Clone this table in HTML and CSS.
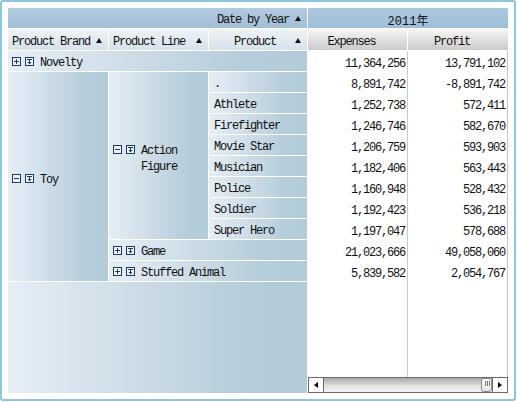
FILE: index.html
```html
<!DOCTYPE html>
<html>
<head>
<meta charset="utf-8">
<link rel="stylesheet" href="styles.css">
</head>
<body>
<div class="frame">
  <div class="pivot">
    <div class="left">
      <div class="h-top span-all"><span>Date by Year</span><i class="sort"></i></div>
      <div class="h-col"><span class="label">Product Brand</span><i class="sort"></i></div>
      <div class="h-col"><span class="label">Product Line</span><i class="sort"></i></div>
      <div class="h-col center"><span class="label">Product</span><i class="sort"></i></div>

      <div class="cell span-all">
        <span class="icons">
          <svg class="ic" viewBox="0 0 9 9"><rect x=".5" y=".5" width="8" height="8" fill="#eef4f9" stroke="#1b3b62"/><path d="M2 4.5h5M4.5 2v5" stroke="#1b3b62"/></svg>
          <svg class="ic" viewBox="0 0 9 9"><rect x=".5" y=".5" width="8" height="8" fill="#eef4f9" stroke="#1b3b62"/><path d="M2 2.5h5M4.5 2.5v3" stroke="#1b3b62"/><path d="M2.5 5h4l-2 2.5z" fill="#1b3b62"/></svg>
        </span>
        <span>Novelty</span>
      </div>

      <div class="cell toy">
        <span class="icons">
          <svg class="ic" viewBox="0 0 9 9"><rect x=".5" y=".5" width="8" height="8" fill="#eef4f9" stroke="#1b3b62"/><path d="M2 4.5h5" stroke="#1b3b62"/></svg>
          <svg class="ic" viewBox="0 0 9 9"><rect x=".5" y=".5" width="8" height="8" fill="#eef4f9" stroke="#1b3b62"/><path d="M2 2.5h5M4.5 2.5v3" stroke="#1b3b62"/><path d="M2.5 5h4l-2 2.5z" fill="#1b3b62"/></svg>
        </span>
        <span>Toy</span>
      </div>

      <div class="cell af">
        <div class="group">
          <span class="icons">
            <svg class="ic" viewBox="0 0 9 9"><rect x=".5" y=".5" width="8" height="8" fill="#eef4f9" stroke="#1b3b62"/><path d="M2 4.5h5" stroke="#1b3b62"/></svg>
            <svg class="ic" viewBox="0 0 9 9"><rect x=".5" y=".5" width="8" height="8" fill="#eef4f9" stroke="#1b3b62"/><path d="M2 2.5h5M4.5 2.5v3" stroke="#1b3b62"/><path d="M2.5 5h4l-2 2.5z" fill="#1b3b62"/></svg>
          </span>
          <span class="wrap">Action Figure</span>
        </div>
      </div>

      <div class="cell prod">.</div>
      <div class="cell prod">Athlete</div>
      <div class="cell prod">Firefighter</div>
      <div class="cell prod">Movie Star</div>
      <div class="cell prod">Musician</div>
      <div class="cell prod">Police</div>
      <div class="cell prod">Soldier</div>
      <div class="cell prod">Super Hero</div>

      <div class="cell wide">
        <span class="icons">
          <svg class="ic" viewBox="0 0 9 9"><rect x=".5" y=".5" width="8" height="8" fill="#eef4f9" stroke="#1b3b62"/><path d="M2 4.5h5M4.5 2v5" stroke="#1b3b62"/></svg>
          <svg class="ic" viewBox="0 0 9 9"><rect x=".5" y=".5" width="8" height="8" fill="#eef4f9" stroke="#1b3b62"/><path d="M2 2.5h5M4.5 2.5v3" stroke="#1b3b62"/><path d="M2.5 5h4l-2 2.5z" fill="#1b3b62"/></svg>
        </span>
        <span>Game</span>
      </div>
      <div class="cell wide">
        <span class="icons">
          <svg class="ic" viewBox="0 0 9 9"><rect x=".5" y=".5" width="8" height="8" fill="#eef4f9" stroke="#1b3b62"/><path d="M2 4.5h5M4.5 2v5" stroke="#1b3b62"/></svg>
          <svg class="ic" viewBox="0 0 9 9"><rect x=".5" y=".5" width="8" height="8" fill="#eef4f9" stroke="#1b3b62"/><path d="M2 2.5h5M4.5 2.5v3" stroke="#1b3b62"/><path d="M2.5 5h4l-2 2.5z" fill="#1b3b62"/></svg>
        </span>
        <span>Stuffed Animal</span>
      </div>

      <div class="cell span-all filler"></div>
    </div>

    <div class="right">
      <div class="rh-top">2011年</div>
      <div class="rh-cols">
        <div>Expenses</div>
        <div>Profit</div>
      </div>
      <div class="data">
        <span>11,364,256</span><span>13,791,102</span>
        <span>8,891,742</span><span>-8,891,742</span>
        <span>1,252,738</span><span>572,411</span>
        <span>1,246,746</span><span>582,670</span>
        <span>1,206,759</span><span>593,903</span>
        <span>1,182,406</span><span>563,443</span>
        <span>1,160,948</span><span>528,432</span>
        <span>1,192,423</span><span>536,218</span>
        <span>1,197,047</span><span>578,688</span>
        <span>21,023,666</span><span>49,058,060</span>
        <span>5,839,582</span><span>2,054,767</span>
      </div>
      <div class="scroll">
        <div class="btn left-btn"><i class="tri-l"></i></div>
        <div class="track"><div class="thumb"></div></div>
        <div class="btn right-btn"><i class="tri-r"></i></div>
      </div>
    </div>
  </div>
</div>
</body>
</html>
```

FILE: styles.css
```css
* { box-sizing: border-box; }
html, body { margin: 0; padding: 0; background: #fff; }
body {
  font-family: "Liberation Mono", "Noto Sans CJK SC", monospace;
  font-size: 12px;
  letter-spacing: -1.2px;
  color: #111;
}
.frame {
  width: 516px;
  height: 401px;
  border: 2px solid #8dc6e5;
  border-radius: 3px;
  padding: 6px;
  background: #fff;
}
.pivot {
  display: flex;
  gap: 1px;
  height: 100%;
}
.left {
  width: 299px;
  display: grid;
  grid-template-columns: 100px 99px 98px;
  grid-template-rows: 20px 21px repeat(11, 20px) 1fr;
  gap: 1px;
  background: #fff;
}
.span-all { grid-column: 1 / -1; }
.wide { grid-column: span 2; }

.h-top {
  background: linear-gradient(#b3cadf, #a3bed6);
  display: flex;
  align-items: center;
  justify-content: flex-end;
  gap: 6px;
  padding: 4px 6px 0 0;
}
.h-col {
  background: linear-gradient(#eef3f7, #d6e2eb);
  display: flex;
  align-items: center;
  padding: 4px 6px 0 4px;
}
.h-col .label { flex: 1; }
.h-col.center .label { text-align: center; padding-left: 2px; }
.sort {
  display: block;
  width: 0;
  height: 0;
  margin-top: -3px;
  border-left: 3px solid transparent;
  border-right: 3px solid transparent;
  border-bottom: 5px solid #111;
}

.cell {
  background: linear-gradient(to right, #e6eef5 0%, #b5ccda 80%, #b3cbd9 100%);
  display: flex;
  align-items: center;
  padding: 4px 0 0 4px;
}
.cell .icons { margin-top: -3px; }
.toy { grid-row: span 10; padding-top: 6px; }
.af { grid-row: span 8; padding-top: 6px; }
.prod { padding-left: 5px; }
.icons {
  display: flex;
  gap: 4px;
  margin-right: 6px;
  flex: none;
}
.ic { width: 9px; height: 9px; display: block; }
.group { display: flex; align-items: flex-start; }
.cell .group .icons { margin-top: 2px; }
.wrap { width: 56px; line-height: 16px; }

.right {
  width: 200px;
  display: flex;
  flex-direction: column;
}
.rh-top {
  height: 20px;
  margin-bottom: 1px;
  background: linear-gradient(#abc8df, #9fbfd9);
  display: flex;
  align-items: center;
  justify-content: center;
  letter-spacing: 0;
  font-size: 12px;
  padding-top: 3px;
}
.rh-cols {
  height: 21px;
  margin-bottom: 1px;
  display: grid;
  grid-template-columns: 100px 100px;
}
.rh-cols div {
  background: linear-gradient(#f6f6f6, #cbcbcb);
  display: flex;
  align-items: center;
  justify-content: center;
  padding: 4px 12px 0 0;
}
.rh-cols div:first-child { border-right: 1px solid #fff; }
.data {
  flex: 1;
  display: grid;
  grid-template-columns: 100px 99px;
  grid-auto-rows: 21px;
  align-content: start;
  border-right: 1px solid #c6c6c6;
  background: #fff linear-gradient(#cacaca, #cacaca) 99px 0 / 1px 100% no-repeat;
}
.data span {
  display: flex;
  align-items: center;
  justify-content: flex-end;
  padding: 4px 3px 0 0;
}
.data span:nth-child(2n) { padding-right: 2px; }

.scroll {
  height: 16px;
  display: flex;
  border: 1px solid #6a6a6a;
}
.btn {
  width: 15px;
  background: #fff;
  display: flex;
  align-items: center;
  justify-content: center;
}
.left-btn { border-right: 1px solid #6a6a6a; }
.right-btn { border-left: 1px solid #6a6a6a; }
.tri-l, .tri-r {
  display: block;
  width: 0;
  height: 0;
  border-top: 3px solid transparent;
  border-bottom: 3px solid transparent;
}
.tri-l { border-right: 4px solid #000; }
.tri-r { border-left: 4px solid #000; }
.track {
  flex: 1;
  display: flex;
  justify-content: flex-end;
  align-items: center;
  background: linear-gradient(#a9a9a9, #e4e4e4 60%, #f2f2f2);
}
.thumb {
  width: 11px;
  height: 14px;
  border: 1px solid #8c8c8c;
  border-radius: 3px;
  background:
    repeating-linear-gradient(to right, transparent 0 1px, #777 1px 2px) 2px 2px / 7px 5px no-repeat,
    linear-gradient(#fdfdfd, #e6e6e6);
}
```
